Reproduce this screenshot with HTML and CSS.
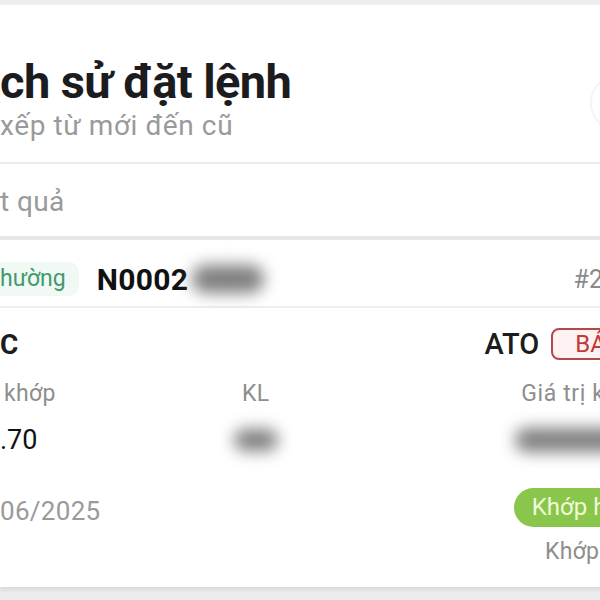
FILE: index.html
```html
<!DOCTYPE html>
<html lang="vi">
<head>
<meta charset="utf-8">
<link rel="stylesheet" href="styles.css">
</head>
<body>
<div class="page">
  <div class="topbar"></div>
  <header class="header">
    <div class="head-row">
      <div class="titles">
        <h1 class="title">ch sử đặt lệnh</h1>
        <p class="subtitle">xếp từ mới đến cũ</p>
      </div>
      <div class="circle-btn"></div>
    </div>
    <div class="results">t quả</div>
  </header>
  <section class="card">
    <div class="card-top">
      <span class="tag">hường</span>
      <span class="order-id">N0002</span>
      <span class="blur blur-id"></span>
      <span class="order-no">#21</span>
    </div>
    <div class="card-body">
      <div class="row row-symbol">
        <span class="symbol">C</span>
        <div class="symbol-right">
          <span class="ordtype">ATO</span>
          <span class="side">BÁN</span>
        </div>
      </div>
      <div class="grid">
        <span class="label">khớp</span>
        <span class="label label-mid">KL</span>
        <span class="label label-right">Giá trị khớp</span>
        <span class="value">.70</span>
        <span class="value-mid"><span class="blur blur-kl"></span></span>
        <span class="value-right"><span class="blur blur-val"></span></span>
      </div>
      <div class="row row-status">
        <span class="date">06/2025</span>
        <div class="status">
          <span class="pill">Khớp hết</span>
          <span class="status-note">Khớp 100</span>
        </div>
      </div>
    </div>
  </section>
</div>
</body>
</html>
```

FILE: styles.css
```css
html, body {
  margin: 0;
  padding: 0;
}
body {
  width: 600px;
  height: 600px;
  overflow: hidden;
  background: #ececec;
  font-family: Roboto, "Noto Sans", "Liberation Sans", sans-serif;
  color: #1c1c1e;
}
.page {
  width: 660px;
}
.topbar {
  height: 5px;
  background: #eeeeee;
}
.header {
  background: #ffffff;
  padding-top: 49px;
}
.head-row {
  display: flex;
  justify-content: space-between;
  align-items: flex-start;
  border-bottom: 2px solid #ececec;
  padding-bottom: 20px;
}
.title {
  margin: 0;
  font-size: 47px;
  line-height: 56px;
  font-weight: 700;
  letter-spacing: -0.6px;
  color: #1c1c1e;
}
.subtitle {
  margin: 0;
  font-size: 28px;
  line-height: 32px;
  letter-spacing: 0.6px;
  color: #9a9a9a;
}
.circle-btn {
  width: 54px;
  height: 54px;
  border-radius: 50%;
  border: 2px solid #f4f4f4;
  margin-top: 20px;
  margin-right: 12px;
  flex: none;
}
.results {
  font-size: 28px;
  letter-spacing: 0.4px;
  line-height: 68px;
  padding-top: 4px;
  color: #9a9a9a;
  border-bottom: 4px solid #e6e6e6;
}
.card {
  background: #ffffff;
  box-shadow: 0 3px 4px rgba(0,0,0,0.08);
  padding-bottom: 22px;
}
.card-top {
  display: flex;
  align-items: center;
  height: 54px;
  padding-top: 12px;
  padding-right: 43px;
  border-bottom: 2px solid #efefef;
}
.tag {
  background: #f0f9f4;
  color: #3f9a6c;
  font-size: 23px;
  line-height: 34px;
  padding: 0 13px 0 0;
  border-radius: 0 10px 10px 0;
}
.order-id {
  font-size: 30px;
  font-weight: 700;
  margin-left: 18px;
  letter-spacing: 0.3px;
  color: #111;
}
.blur {
  display: inline-block;
  background: #7e7e7e;
  filter: blur(8px);
  border-radius: 20px;
}
.blur-id {
  width: 72px;
  height: 28px;
  margin-left: 4px;
}
.order-no {
  margin-left: auto;
  font-size: 25px;
  color: #8a8a8a;
}
.card-body {
  padding-right: 15px;
}
.row {
  display: flex;
  justify-content: space-between;
  align-items: center;
}
.row-symbol {
  height: 72px;
}
.symbol {
  font-size: 28px;
  font-weight: 700;
}
.symbol-right {
  display: flex;
  align-items: center;
  gap: 12px;
}
.ordtype {
  font-size: 29px;
  font-weight: 500;
}
.side {
  border: 2px solid #b3494b;
  background: #fdf1f1;
  color: #c0393b;
  border-radius: 8px;
  font-size: 24px;
  line-height: 28px;
  padding: 0 20px 0 22px;
}
.grid {
  display: grid;
  grid-template-columns: 242px 1fr auto;
  row-gap: 14px;
}
.label {
  font-size: 23px;
  letter-spacing: 0.3px;
  line-height: 28px;
  color: #8e8e8e;
  padding-left: 4px;
}
.label-mid {
  padding-left: 0;
}
.label-right {
  text-align: right;
  letter-spacing: 0.6px;
}
.value {
  font-size: 27px;
  line-height: 36px;
  color: #111;
}
.blur-kl {
  width: 44px;
  height: 22px;
  margin-top: 7px;
  margin-left: -8px;
}
.value-right {
  text-align: right;
}
.blur-val {
  width: 130px;
  height: 24px;
  margin-top: 6px;
}
.row-status {
  align-items: flex-start;
  margin-top: 30px;
}
.date {
  font-size: 26px;
  letter-spacing: 0.3px;
  color: #9a9a9a;
  margin-top: 8px;
}
.status {
  display: flex;
  flex-direction: column;
  align-items: flex-end;
  gap: 11px;
}
.pill {
  background: #8bc64c;
  color: #eefbd8;
  font-size: 24px;
  line-height: 39px;
  padding: 0 18px;
  border-radius: 20px;
}
.status-note {
  font-size: 23px;
  letter-spacing: 0.3px;
  color: #8e8e8e;
}
```
